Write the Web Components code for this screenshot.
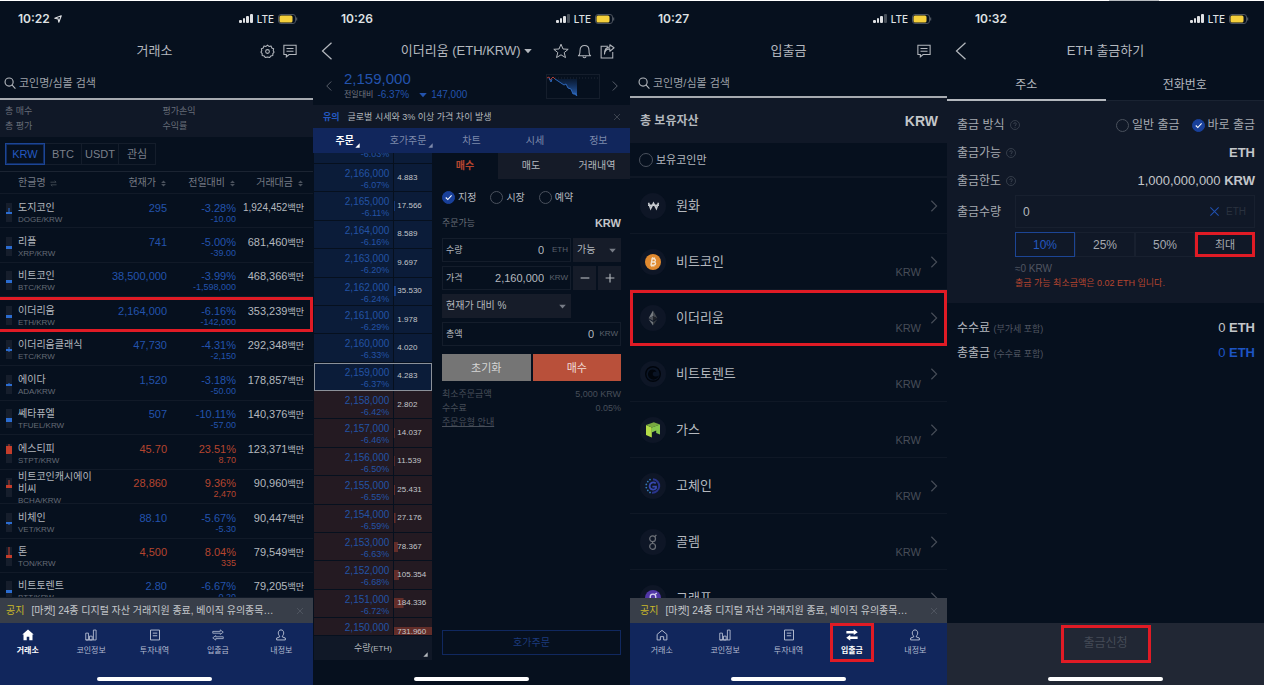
<!DOCTYPE html>
<html lang="ko">
<head>
<meta charset="utf-8">
<title>거래소</title>
<style>
    body {
        margin: 0;
        overflow: hidden;
        background: #06101e;
        color: #b4b8be;
        font-family: "Liberation Sans", "Noto Sans CJK KR", sans-serif;
        font-size: 10px;
        line-height: 12px;
        --bg: #06101e;
        --panel: #101827;
        --line: #141d2b;
        --dim: #666c77;
        --blue: #2353ad;
        --red: #b5452f;
        --navy: #11265c;
        --mark: #e01b25;
    }
    .edge { display: flex; justify-content: flex-end; height: 1px; background: #fff; }
    .edge i { width: 50px; margin-right: 105px; background: #b8bcc0; }
    /* the first phone is cropped a little on its left side */
    .strip {
        display: grid;
        grid-template-columns: repeat(4, minmax(0, 1fr));
        height: calc(100vh - 1px);
        margin-left: -4px;
    }
</style>
</head>
<body>
<div class="edge"><i></i></div>
<main class="strip">
    <phone-screen time="10:22" location>
        <app-header slot="head">거래소
            <x-icon slot="end" name="gear" size="15"></x-icon>
            <x-icon slot="end" name="chat" size="14"></x-icon>
        </app-header>
        <search-box></search-box>
        <market-list></market-list>
        <notice-bar></notice-bar>
        <tab-bar slot="foot" active="0"></tab-bar>
    </phone-screen>

    <phone-screen time="10:26">
        <app-header slot="head" wide>이더리움 (ETH/KRW) <x-icon name="caret" size="8"></x-icon>
            <x-icon slot="start" name="back" size="18"></x-icon>
            <x-icon slot="end" name="star" size="16"></x-icon>
            <x-icon slot="end" name="bell" size="15"></x-icon>
            <x-icon slot="end" name="share" size="15"></x-icon>
        </app-header>
        <price-head></price-head>
        <trade-tabs></trade-tabs>
        <trade-pane></trade-pane>
    </phone-screen>

    <phone-screen time="10:27">
        <app-header slot="head">입출금
            <x-icon slot="end" name="chat" size="14"></x-icon>
        </app-header>
        <search-box short></search-box>
        <asset-list></asset-list>
        <notice-bar></notice-bar>
        <tab-bar slot="foot" active="3" marked></tab-bar>
    </phone-screen>

    <phone-screen time="10:32">
        <app-header slot="head" tight>ETH 출금하기
            <x-icon slot="start" name="back" size="18"></x-icon>
        </app-header>
        <withdraw-form></withdraw-form>
    </phone-screen>
</main>

<script>
// Base element: puts the markup returned by render() in an open shadow root
class BaseElement extends HTMLElement {
    constructor() {
        super();
        this.attachShadow({ mode: 'open' });
    }

    connectedCallback() {
        this.shadowRoot.innerHTML = `<style>
            *, :host { box-sizing: border-box; }
            button, input, select { font: inherit; color: inherit; margin: 0; padding: 0; border: 0; background: none; border-radius: 0; outline: 0; }
            a { color: inherit; text-decoration: none; }
        </style>` + this.render();
    }
}

const stroke = 'fill="none" stroke="currentColor"';

const ICONS = {
    gear: `<g ${stroke} stroke-width="1.1"><path d="M8 1.2 9.6 2.6 11.8 2.1 12.5 4.2 14.6 5 14.1 7.1 15 8.6 13.7 10.2 13.7 12.3 11.6 12.7 10.2 14.5 8 13.8 5.8 14.5 4.4 12.7 2.3 12.3 2.3 10.2 1 8.6 1.9 7.1 1.4 5 3.5 4.2 4.2 2.1 6.4 2.6Z" stroke-linejoin="round"/><circle cx="8" cy="8" r="2"/></g>`,
    chat: `<g ${stroke} stroke-width="1.2"><path d="M1 1.5H15V12H7L3.8 14.6V12H1Z"/><path d="M4 5.2H12M4 8.2H12"/></g>`,
    search: `<g ${stroke} stroke-width="1.5"><circle cx="6.8" cy="6.8" r="5.4"/><path d="M10.6 10.6 15.2 15.4"/></g>`,
    back: `<path d="M12 .6 4 8 12 15.4" ${stroke} stroke-width="1.1"/>`,
    left: `<path d="M11 2 5 8 11 14" ${stroke} stroke-width="1.3"/>`,
    right: `<path d="M5 2 11 8 5 14" ${stroke} stroke-width="1.3"/>`,
    caret: `<path d="M.5 4H15.5L8 12.5Z" fill="currentColor"/>`,
    corner: `<path d="M15 1V15H1Z" fill="currentColor"/>`,
    close: `<path d="M2 2 14 14M14 2 2 14" ${stroke} stroke-width="1.5"/>`,
    minus: `<path d="M1 8H15" ${stroke} stroke-width="1.8"/>`,
    plus: `<path d="M1 8H15M8 1V15" ${stroke} stroke-width="1.8"/>`,
    star: `<path d="M8 1.2 10 6 15.2 6.3 11.2 9.6 12.5 14.6 8 11.8 3.5 14.6 4.8 9.6 .8 6.3 6 6Z" ${stroke} stroke-linejoin="round"/>`,
    bell: `<g ${stroke} stroke-width="1.1"><path d="M1.5 12.5C3 11.5 3.2 10 3.2 6.8 3.2 3.2 5.5 1.5 8 1.5S12.8 3.2 12.8 6.8C12.8 10 13 11.5 14.5 12.5Z" stroke-linejoin="round"/><path d="M6.3 13.2C6.6 15 9.4 15 9.7 13.2"/></g>`,
    share: `<g ${stroke} stroke-width="1.1"><path d="M8.5 2.5H1.2V15H13.6V8.5"/><path d="M4.8 10.8C5 7 7.5 5.2 10.5 5.2V7.8L15 4 10.5 .8V3.2C6.5 3.4 4.6 6.5 4.8 10.8Z" stroke-linejoin="round"/></g>`,
    sort: `<path d="M2.5 6.8 8 1 13.5 6.8ZM2.5 9.2 8 15 13.5 9.2Z" fill="currentColor"/>`,
    swap: `<path d="M1 5H14L10.5 2M15 11H2L5.5 14" ${stroke} stroke-width="1.8"/>`,
    home: `<path d="M8 1.8 1.5 7.2V14.6H5.8V10.2H10.2V14.6H14.5V7.2Z" ${stroke} stroke-width="1.3" stroke-linejoin="round"/>`,
    homeOn: `<path d="M8 .8 .4 7.4H2V15H6.3V10.4H9.7V15H14V7.4H15.6Z" fill="currentColor"/>`,
    bars: `<path d="M1 5.5H4.6V14.6H1ZM6 9.5H9.6V14.6H6ZM11.2 14.6V1.4H14.8V14.6H1" ${stroke} stroke-width="1.2"/>`,
    doc: `<path d="M2 1.4H14V14.6H2ZM5 5.5H11M5 9H11" ${stroke} stroke-width="1.3"/>`,
    move: `<path d="M1 3.2H11V1.2L15 4.2 11 7.2V5.6H1ZM15 10.4H5V8.8L1 11.8 5 14.8V12.8H15Z" ${stroke} stroke-width="1.1"/>`,
    moveOn: `<path d="M.5 2.7H10.3V.2L15.7 4.3 10.3 8V5.9H.5ZM15.5 10H5.7V7.6L.3 11.7 5.7 15.6V13.2H15.5Z" fill="currentColor"/>`,
    person: `<path d="M8 1.2C5.8 1.2 4.4 2.9 4.4 5.2 4.4 7.2 5.3 8.6 6.2 9.3V10.6L2.2 12V14.6H13.8V12L9.8 10.6V9.3C10.7 8.6 11.6 7.2 11.6 5.2 11.6 2.9 10.2 1.2 8 1.2Z" ${stroke} stroke-width="1.3"/>`,
    help: `<circle cx="8" cy="8" r="7.2" ${stroke}/><path d="M5.9 6.3C6 3.8 10.2 3.8 10.1 6.4 10 7.8 8 7.9 8 9.8M8 11.2V12.4" ${stroke} stroke-width="1.2"/>`,
    locate: `<path d="M14.5 1.5 9.6 14.4 8.2 7.8 1.5 6.4Z" ${stroke} stroke-width="2.2" stroke-linejoin="round"/>`,
    // coin marks
    won: `<path d="M.8 4 3.8 12.4 8 4.6 12.2 12.4 15.2 4M0 7.6H16" fill="none" stroke="#c6c9ce" stroke-width="2.2"/>`,
    btc: `<circle cx="8" cy="8" r="8" fill="#e0892f"/><g fill="none" stroke="#f3e3cf" stroke-width="1.4"><path d="M5.4 11.2H8.6C11.4 11 11 8.2 8.8 8 11 7.7 11 5 8.6 4.8H6.6M6.4 8H8.8M7.1 4.8 6 11.2M7.6 3.2V4.8M9.4 3.4V4.9M6.9 11V12.8M8.8 11V12.6"/></g>`,
    eth: `<path d="M8 .5 3.6 8.2 8 6.3Z" fill="#777c82"/><path d="M8 .5 12.4 8.2 8 6.3Z" fill="#454a50"/><path d="M8 6.3 3.6 8.2 8 10.8Z" fill="#4c5158"/><path d="M8 6.3 12.4 8.2 8 10.8Z" fill="#1d2128"/><path d="M3.6 9.3 8 15.6V11.9Z" fill="#70757b"/><path d="M12.4 9.3 8 15.6V11.9Z" fill="#34393f"/>`,
    btt: `<circle cx="8" cy="8" r="7.3" fill="#0a1425" stroke="#01050c" stroke-width="1.4"/><path d="M14 9.5C12.6 13.4 8.4 14.8 5.2 12.6 1.8 10 2.5 5 6.2 3.8 8.6 3 11 4.2 11.4 6.2 10.2 5.4 8.4 5.8 7.8 7.2 7.2 9 8.6 10.4 10.4 10.5 12 10.6 13.2 10.2 14 9.5Z" fill="#01050c"/>`,
    gas: `<path d="M1 3 6.8 5.5V15.6L1 13Z" fill="#b4dc48"/><path d="M1 3 8.8 .2 15 2.4 6.8 5.5Z" fill="#78a840"/><path d="M6.8 5.5 15 2.4V12.6L11.2 11V8.6L6.8 10.4Z" fill="#86c74c"/>`,
    goc: `<path d="M8 1.3A6.7 6.7 0 1 1 7 14.7" fill="none" stroke="#29348c" stroke-width="2"/><path d="M10.8 5.4C8.6 3.4 4.8 4.6 4.6 8 4.6 11.6 9 12.8 11 10.2V8.6H7.4" fill="none" stroke="#3748b0" stroke-width="1.8"/><g fill="#3578b8"><circle cx="5" cy="1.6" r=".9"/><circle cx="2.8" cy="3.6" r=".9"/><circle cx="1.3" cy="6.4" r=".9"/><circle cx="1.3" cy="9.6" r=".9"/><circle cx="2.8" cy="12.4" r=".9"/><circle cx="5" cy="14.4" r=".9"/></g>`,
    glm: `<g fill="none" stroke="#6d7178" stroke-width="1.2"><circle cx="7.6" cy="4.8" r="2.9"/><circle cx="7.6" cy="12.4" r="2.9"/><path d="M7.6 7.7V9.5M9.6 2.8 11.4 .8"/></g>`,
    grt: `<circle cx="8" cy="8" r="8" fill="#5136a6"/><circle cx="8" cy="7" r="2.8" fill="none" stroke="#d9d4ee" stroke-width="1.3"/><path d="M10.3 4.2 11.8 3M6 12.6 8.6 11" stroke="#d9d4ee" stroke-width="1.3"/>`
};

class XIcon extends BaseElement {
    render() {
        const size = this.getAttribute('size') || 12;
        return `<style>
            :host { display: inline-block; width: ${size}px; height: ${size}px; flex: none; }
            svg { display: block; width: 100%; height: 100%; overflow: visible; }
        </style>
        <svg viewBox="0 0 16 16" aria-hidden="true">${ICONS[this.getAttribute('name')]}</svg>`;
    }
}
customElements.define('x-icon', XIcon);

class PhoneScreen extends BaseElement {
    render() {
        const located = this.hasAttribute('location');
        const full = ['10:22', '10:32'].includes(this.getAttribute('time'));
        return `<style>
            :host { position: relative; display: flex; flex-direction: column; min-width: 0; min-height: 0; overflow: hidden; background: var(--bg); }
            .status {
                display: flex; align-items: center; gap: 4px; height: 35px; flex: none;
                padding: 0 15px 0 ${located ? 22 : 28}px;
                font: 600 12px/16px Inter, sans-serif; color: #dfe1e4;
            }
            .status x-icon { margin-right: auto; }
            .time { margin-right: ${located ? 0 : 'auto'}; }
            .net { font-size: 10px; font-weight: 500; }
            .body { display: flex; flex-direction: column; flex: 1; min-height: 0; }
            .bar { position: absolute; left: 0; right: 0; bottom: 4px; width: 36%; height: 4px; margin: auto; border-radius: 2px; background: #fff; }
        </style>
        <div class="status">
            <span class="time">${this.getAttribute('time')}</span>
            ${located ? '<x-icon name="locate" size="8"></x-icon>' : ''}
            <svg width="14" height="9" viewBox="0 0 14 9" fill="#dfe1e4"><rect y="6" width="3" height="3" rx="1"/><rect x="4" y="4" width="2" height="5" rx="1"/><rect x="7" y="2" width="3" height="7" rx="1"/><rect x="11" width="3" height="9" rx="1" opacity="${full ? 1 : .3}"/></svg>
            <span class="net">LTE</span>
            <svg width="20" height="10" viewBox="0 0 20 10"><rect x=".5" y=".5" width="17" height="9" rx="2.5" fill="none" stroke="#4b525d"/><rect x="1.5" y="1.5" width="13" height="7" rx="1.5" fill="#f5d03c"/><path d="M18.6 3.5V6.5" stroke="#4b525d" stroke-width="1.3"/></svg>
        </div>
        <slot name="head"></slot>
        <div class="body"><slot></slot></div>
        <slot name="foot"></slot>
        <div class="bar"></div>`;
    }
}
customElements.define('phone-screen', PhoneScreen);

class AppHeader extends BaseElement {
    render() {
        return `<style>
            :host { display: grid; grid-template-columns: 1fr auto 1fr; align-items: center; flex: none; height: 30px; padding: 0 16px; }
            :host([wide]) { padding: 0 15px 0 5px; }
            :host([tight]) { padding: 0 5px; }
            h1 { margin: 0; font-weight: 400; font-size: 13px; line-height: 18px; white-space: nowrap; }
            .side { display: flex; align-items: center; gap: 8px; }
            .end { justify-content: flex-end; }
        </style>
        <div class="side"><slot name="start"></slot></div>
        <h1><slot></slot></h1>
        <div class="side end"><slot name="end"></slot></div>`;
    }
}
customElements.define('app-header', AppHeader);

class SearchBox extends BaseElement {
    render() {
        return `<style>
            :host { display: block; flex: none; border-bottom: 2px solid #a6aab0; }
            label { display: flex; align-items: center; gap: 3px; height: 32px; padding: 2px 8px 0; }
            :host([short]) label { height: 30px; padding-top: 4px; }
            input { flex: 1; min-width: 0; font-size: 11px; line-height: 14px; }
            input::placeholder { color: #9da1a8; opacity: 1; }
        </style>
        <label><x-icon name="search" size="12"></x-icon><input type="search" aria-label="코인명/심볼 검색" placeholder="코인명/심볼 검색"></label>`;
    }
}
customElements.define('search-box', SearchBox);

// name, pair, price, rate, diff, volume, [wick top, wick bottom, body top, body height]
const COINS = [
    ['도지코인', 'DOGE/KRW', '295', '-3.28%', '-10.00', '1,924,452', [5, 11, 9, 2]],
    ['리플', 'XRP/KRW', '741', '-5.00%', '-39.00', '681,460', [9, 12, 9, 3]],
    ['비트코인', 'BTC/KRW', '38,500,000', '-3.99%', '-1,598,000', '468,366', [9, 12, 9, 3]],
    ['이더리움', 'ETH/KRW', '2,164,000', '-6.16%', '-142,000', '353,239', [9, 12, 9, 3]],
    ['이더리움클래식', 'ETC/KRW', '47,730', '-4.31%', '-2,150', '292,348', [7, 12, 9, 2]],
    ['에이다', 'ADA/KRW', '1,520', '-3.18%', '-50.00', '178,857', [8, 11, 9, 2]],
    ['쎄타퓨엘', 'TFUEL/KRW', '507', '-10.11%', '-57.00', '140,376', [9, 13, 9, 4]],
    ['에스티피', 'STPT/KRW', '45.70', '23.51%', '8.70', '123,371', [0, 9, 2, 8]],
    ['비트코인캐시에이비씨', 'BCHA/KRW', '28,860', '9.36%', '2,470', '90,960', [2, 9, 7, 3]],
    ['비체인', 'VET/KRW', '88.10', '-5.67%', '-5.30', '90,447', [9, 12, 9, 2]],
    ['톤', 'TON/KRW', '4,500', '8.04%', '335', '79,549', [0, 10, 8, 3]],
    ['비트토렌트', 'BTT/KRW', '2.80', '-6.67%', '-0.20', '79,205', [9, 12, 9, 3]]
];

class MarketList extends BaseElement {
    row([name, pair, price, rate, diff, volume, [w1, w2, top, height]]) {
        const down = rate.startsWith('-');
        const fill = down ? '#2b6cd0' : '#c43d2b';
        return `<tr class="${down ? 'down' : 'up'} ${pair === 'ETH/KRW' ? 'marked' : ''}">
            <td><svg width="6" height="19" viewBox="0 0 6 19"><path d="M0 0H6V19H0Z" fill="#161e2c"/><path d="M3 ${w1}V${w2}" stroke="${fill}"/><path d="M0 ${top}h6v${height}h-6Z" fill="${fill}"/></svg></td>
            <td class="name">${name}<small>${pair}</small></td>
            <td class="num single">${price}</td>
            <td class="num">${rate}<small>${diff}</small></td>
            <td class="num single volume ${volume.length > 8 ? 'long' : ''}">${volume}<b>백만</b></td>
        </tr>`;
    }

    render() {
        return `<style>
            :host { display: flex; flex-direction: column; flex: 1; min-height: 0; }
            .summary { display: grid; grid-template-columns: 1fr 1fr; column-gap: 16px; padding: 4px 9px 3px; background: var(--panel); color: var(--dim); font-size: 9px; line-height: 15px; }
            .markets { display: flex; padding: 6px 9px; border-bottom: 1px solid #1b2432; }
            .markets button { width: 38px; height: 22px; border: 1px solid var(--line); margin-right: -1px; font-size: 11px; color: #7a7f89; }
            .markets button.on { width: 40px; border-color: #1c4595; color: #2459c0; position: relative; box-shadow: inset 0 0 0 1px #102c62; }
            table, tbody, thead { display: grid; min-height: 0; }
            table { flex: 1; grid-template-rows: 22px minmax(0, 1fr); }
            tbody { grid-template-rows: repeat(11, minmax(0, 1fr)) 25px; overflow: hidden; }
            tr { display: grid; grid-template-columns: 12px 76fr 73fr 69fr 68fr; grid-template-rows: minmax(34px, 1fr); align-items: center; min-height: 0; padding: 0 9px 0 10px; border-bottom: 1px solid #111a28; overflow: hidden; }
            thead tr { grid-template-rows: 1fr; }
            th, td { padding: 0; font-weight: 400; text-align: left; min-width: 0; }
            th { color: #757a84; white-space: nowrap; }
            th:nth-child(n+3) { text-align: right; }
            th x-icon { margin-left: 4px; vertical-align: -1px; color: #4a515c; }
            td { padding-top: 4px; }
            td:first-child { padding-top: 2px; }
            td svg { display: block; }
            small { display: block; font-size: 8px; line-height: 11px; color: #656b76; }
            .num { text-align: right; font-size: 11px; white-space: nowrap; }
            .num small { font-size: 9px; color: inherit; }
            .single { padding-bottom: 11px; }
            .down .num { color: var(--blue); }
            .up .num { color: var(--red); }
            tr .num.volume { color: #b4b8be; }
            .long { font-size: 10px; }
            b { font-weight: 400; font-size: 9px; line-height: 0; }
            .marked { outline: 3px solid var(--mark); outline-offset: -3px; }
        </style>
        <div class="summary"><span>총 매수</span><span>평가손익</span><span>총 평가</span><span>수익률</span></div>
        <div class="markets"><button class="on">KRW</button><button>BTC</button><button>USDT</button><button>관심</button></div>
        <table>
            <thead><tr><th></th>
                <th>한글명<x-icon name="swap" size="7"></x-icon></th>
                <th>현재가<x-icon name="sort" size="7"></x-icon></th>
                <th>전일대비<x-icon name="sort" size="7"></x-icon></th>
                <th>거래대금<x-icon name="sort" size="7"></x-icon></th>
            </tr></thead>
            <tbody>${COINS.map(coin => this.row(coin)).join('')}</tbody>
        </table>`;
    }
}
customElements.define('market-list', MarketList);

class NoticeBar extends BaseElement {
    render() {
        return `<style>
            :host { display: flex; align-items: center; gap: 7px; flex: none; height: 25px; padding: 0 9px 0 10px; background: #383e49; color: #c3c6ca; }
            a { flex: 1; min-width: 0; white-space: nowrap; }
            b { font-weight: 400; color: #c9b82b; }
            button { display: flex; color: #565c67; }
        </style>
        <b>공지</b><a href="#">[마켓] 24종 디지털 자산 거래지원 종료, 베이직 유의종목…</a>
        <button aria-label="닫기"><x-icon name="close" size="8"></x-icon></button>`;
    }
}
customElements.define('notice-bar', NoticeBar);

class TabBar extends BaseElement {
    render() {
        const active = Number(this.getAttribute('active'));
        const tabs = [['home', '거래소'], ['bars', '코인정보'], ['doc', '투자내역'], ['move', '입출금'], ['person', '내정보']];
        const links = tabs.map(([icon, label], i) =>
            `<a href="#" class="${i === active ? 'on' : ''}"><span><x-icon name="${icon}${i === active ? 'On' : ''}" size="12"></x-icon>${label}</span></a>`);
        return `<style>
            :host { display: flex; flex: none; height: 62px; background: var(--navy); font-size: 8px; line-height: 12px; color: #b3bbd0; }
            a { display: flex; flex: 1; justify-content: center; align-items: flex-start; }
            span { display: flex; flex-direction: column; align-items: center; gap: 4px; width: 44px; height: 39px; padding-top: 6px; }
            .on { color: #fff; font-weight: 700; }
            :host([marked]) .on span { outline: 3px solid var(--mark); outline-offset: -3px; }
        </style>${links.join('')}`;
    }
}
customElements.define('tab-bar', TabBar);

class PriceHead extends BaseElement {
    render() {
        return `<style>
            :host { display: block; flex: none; }
            .quote { display: flex; align-items: center; height: 39px; padding: 1px 9px 0 10px; color: #59606b; }
            .value { flex: 1; margin-left: 9px; color: var(--blue); }
            strong { display: block; font-weight: 400; font-size: 15px; line-height: 18px; }
            p { display: flex; align-items: center; gap: 4px; margin: 0; line-height: 14px; }
            small { font-size: 8px; color: #737882; }
            p x-icon { margin-left: 6px; }
            .chart { display: block; margin-right: 9px; }
            .warn { display: flex; align-items: center; gap: 8px; height: 23px; padding: 0 9px 0 10px; background: var(--panel); font-size: 9px; }
            .warn b { color: #2459c0; }
            .warn span { flex: 1; }
            .warn button { display: flex; color: #4b525d; }
        </style>
        <div class="quote">
            <x-icon name="left" size="12"></x-icon>
            <div class="value"><strong>2,159,000</strong>
                <p><small>전일대비</small>-6.37%<x-icon name="caret" size="8"></x-icon>147,000</p></div>
            <svg class="chart" width="54" height="25" viewBox="0 0 54 25">
                <defs><linearGradient id="fade" x2="0" y2="1"><stop stop-color="#1a4384" stop-opacity=".2"/><stop offset="1" stop-color="#2a64b8"/></linearGradient></defs>
                <rect x=".5" y=".5" width="53" height="24" fill="none" stroke="#151e2c"/>
                <path d="M9 4H53" stroke="#1e2735" stroke-dasharray="1 2"/>
                <path d="M9 5 12 7 15 9 18 11 20 10 22 14 25 15 27 20 31 22V5Z" fill="url(#fade)"/>
                <path d="M1 4 3 3 4 6 6 4 7 3 9 5" fill="none" stroke="#a83c36"/>
                <path d="M3 4 5 8 6 5M9 5 12 7 15 9 18 11 20 10 22 14 25 15 27 20 29 19 31 22" fill="none" stroke="#2d66b8"/>
            </svg>
            <x-icon name="right" size="12"></x-icon>
        </div>
        <div class="warn"><b>유의</b><span>글로벌 시세와 3% 이상 가격 차이 발생</span>
            <button aria-label="닫기"><x-icon name="close" size="8"></x-icon></button></div>`;
    }
}
customElements.define('price-head', PriceHead);

class TradeTabs extends BaseElement {
    render() {
        return `<style>
            :host { display: flex; flex: none; height: 25px; background: var(--navy); color: #7e8aab; }
            a { flex: 1; line-height: 26px; text-align: center; }
            span { position: relative; }
            .on { color: #fff; font-weight: 700; }
            x-icon { position: absolute; left: 100%; bottom: -2px; margin-left: 1px; }
        </style>
        <a href="#" class="on"><span>주문<x-icon name="corner" size="5"></x-icon></span></a>
        <a href="#"><span>호가주문<x-icon name="corner" size="5"></x-icon></span></a>
        <a href="#">차트</a><a href="#">시세</a><a href="#">정보</a>`;
    }
}
customElements.define('trade-tabs', TradeTabs);

// Round tick box or radio with its text
class CheckOption extends BaseElement {
    render() {
        const type = this.getAttribute('type') || 'radio';
        const size = this.getAttribute('size') || 13;
        return `<style>
            :host { display: inline-block; }
            label { display: flex; align-items: center; gap: 3px; white-space: nowrap; }
            input { appearance: none; width: ${size}px; height: ${size}px; border: 1px solid #4a515d; border-radius: 50%; }
            input:checked {
                border-color: #19409a;
                background: #19409a url('data:image/svg+xml,<svg xmlns="http://www.w3.org/2000/svg" viewBox="0 0 16 16"><path d="M4 8 7 11 12.5 5" fill="none" stroke="white" stroke-width="1.6"/></svg>') center / 100%;
            }
        </style>
        <label><input type="${type}" ${this.hasAttribute('checked') ? 'checked' : ''}><slot></slot></label>`;
    }
}
customElements.define('check-option', CheckOption);

// the first row is scrolled almost out of view, its price with it
const BOOK = [
    ['', '-6.03%', '6.882'], ['2,166,000', '-6.07%', '4.883'], ['2,165,000', '-6.11%', '17.566'],
    ['2,164,000', '-6.16%', '8.589'], ['2,163,000', '-6.20%', '9.697'], ['2,162,000', '-6.24%', '35.530'],
    ['2,161,000', '-6.29%', '1.978'], ['2,160,000', '-6.33%', '4.020'], ['2,159,000', '-6.37%', '4.283'],
    ['2,158,000', '-6.42%', '2.802'], ['2,157,000', '-6.46%', '14.037'], ['2,156,000', '-6.50%', '11.539'],
    ['2,155,000', '-6.55%', '25.431'], ['2,154,000', '-6.59%', '27.176'], ['2,153,000', '-6.63%', '78.367'],
    ['2,152,000', '-6.68%', '105.354'], ['2,151,000', '-6.72%', '184.336'], ['2,150,000', '-6.76%', '731.960']
];

class OrderBook extends BaseElement {
    render() {
        // asks are the nine rows on top, bids the rest
        const rows = BOOK.map(([price, rate, amount], i) => `<tr class="${i < 9 ? 'ask' : 'bid'} ${i === 8 ? 'now' : ''}">
            <td class="price">${price}<small>${rate}</small></td>
            <td class="amount" style="background-size: ${Math.round(amount / 7.3)}% 10px">${amount}</td></tr>`);
        return `<style>
            :host { display: flex; flex-direction: column; min-height: 0; padding-left: 1px; }
            table { display: grid; flex: 1; min-height: 0; }
            tbody { display: grid; grid-template-rows: 11px repeat(16, minmax(0, 1fr)) 18px; min-height: 0; }
            tr { display: grid; grid-template-columns: 80fr 38fr; grid-template-rows: minmax(27px, 1fr); column-gap: 1px; min-height: 0; overflow: hidden; border-bottom: 1px solid var(--bg); }
            tr:first-child { align-content: end; }
            tr:first-child .price { padding-top: 13px; }
            td { padding: 0; background-color: #0b1c39; background-repeat: no-repeat; background-position: left center; }
            .price { padding: 4px 4px 0 0; text-align: right; color: #2353a5; }
            small { display: block; font-size: 9px; line-height: 11px; }
            .amount { display: flex; align-items: center; padding-left: 3px; font-size: 8px; color: #c3c6ca; background-image: linear-gradient(#17408c, #17408c); }
            .bid td { background-color: #241a22; }
            .bid .amount { background-image: linear-gradient(#632d29, #632d29); }
            .now { outline: 1px solid #8b919a; outline-offset: -1px; }
            button { position: relative; height: 24px; background: var(--panel); font-size: 9px; }
            button small { display: inline; font-size: 8px; }
            button x-icon { position: absolute; right: 4px; bottom: 3px; }
        </style>
        <table><tbody>${rows.join('')}</tbody></table>
        <button>수량<small>(ETH)</small><x-icon name="corner" size="5"></x-icon></button>`;
    }
}
customElements.define('order-book', OrderBook);

class OrderForm extends BaseElement {
    render() {
        return `<style>
            :host { display: flex; flex-direction: column; min-width: 0; }
            nav { display: grid; grid-template-columns: repeat(3, 1fr); line-height: 26px; text-align: center; }
            nav a { background: #151b28; }
            nav .on { background: none; color: var(--red); font-weight: 700; }
            form { display: flex; flex-direction: column; flex: 1; padding: 12px 9px 5px 10px; }
            .kinds { display: flex; gap: 14px; }
            .between { display: flex; justify-content: space-between; }
            .can { margin: 13px 0 9px; line-height: 12px; font-size: 9px; color: #686e78; }
            .can b { font-size: 11px; color: #c3c6ca; }
            .grid { display: grid; grid-template-columns: minmax(0, 1fr) 23px 23px; gap: 4px 2px; }
            .field { display: flex; align-items: center; gap: 5px; min-width: 0; height: 24px; padding: 0 2px 0 3px; border: 1px solid #141d2b; font-size: 9px; white-space: nowrap; }
            .field input { flex: 1; width: 0; min-width: 0; text-align: right; font-size: 11px; }
            .field span { min-width: 19px; text-align: right; font-size: 8px; color: #5b616c; }
            .pick { display: flex; align-items: center; position: relative; min-width: 0; height: 24px; background: #161c29; }
            .pick select { appearance: none; width: 100%; height: 100%; padding: 0 4px; }
            .pick x-icon { position: absolute; right: 5px; pointer-events: none; color: #777c86; }
            .two { grid-column: span 2; }
            .all { grid-column: 1 / -1; }
            .step { display: grid; place-items: center; background: #161c29; }
            .send { display: grid; grid-template-columns: 1fr 1fr; gap: 2px; margin: 8px 0 6px; }
            .send button { height: 27px; background: #757575; font-size: 11px; color: #d5d5d5; }
            .send .buy { background: #b9503a; color: #f0ddd8; }
            .info { font-size: 9px; line-height: 14px; color: #474e59; }
            .info a { text-decoration: underline; }
            .ladder { height: 25px; margin-top: auto; border: 1px solid #10285f; color: #1c3a7d; }
        </style>
        <nav><a href="#" class="on">매수</a><a href="#">매도</a><a href="#">거래내역</a></nav>
        <form>
            <div class="kinds"><check-option checked>지정</check-option><check-option>시장</check-option><check-option>예약</check-option></div>
            <div class="between can"><span>주문가능</span><b>KRW</b></div>
            <div class="grid">
                <label class="field">수량<input value="0"><span>ETH</span></label>
                <div class="pick two"><select aria-label="가능"><option>가능</option></select><x-icon name="caret" size="7"></x-icon></div>
                <label class="field">가격<input value="2,160,000"><span>KRW</span></label>
                <button type="button" class="step" aria-label="내리기"><x-icon name="minus" size="10"></x-icon></button>
                <button type="button" class="step" aria-label="올리기"><x-icon name="plus" size="10"></x-icon></button>
                <div class="pick"><select aria-label="현재가 대비"><option>현재가 대비 %</option></select><x-icon name="caret" size="7"></x-icon></div>
                <label class="field all">총액<input value="0"><span>KRW</span></label>
            </div>
            <div class="send"><button type="reset">초기화</button><button type="button" class="buy">매수</button></div>
            <div class="info">
                <div class="between"><span>최소주문금액</span><span>5,000 KRW</span></div>
                <div class="between"><span>수수료</span><span>0.05%</span></div>
                <a href="#">주문유형 안내</a>
            </div>
            <button type="button" class="ladder">호가주문</button>
        </form>`;
    }
}
customElements.define('order-form', OrderForm);

class TradePane extends BaseElement {
    render() {
        return `<style>
            :host { display: grid; grid-template-columns: 119fr 198fr; flex: 1; min-height: 0; padding-bottom: 25px; }
        </style><order-book></order-book><order-form></order-form>`;
    }
}
customElements.define('trade-pane', TradePane);

class AssetList extends BaseElement {
    render() {
        const assets = [['won', '원화'], ['btc', '비트코인', 'KRW'], ['eth', '이더리움', 'KRW'], ['btt', '비트토렌트', 'KRW'],
            ['gas', '가스', 'KRW'], ['goc', '고체인', 'KRW'], ['glm', '골렘', 'KRW'], ['grt', '그래프']];
        const items = assets.map(([icon, name, unit]) => `<li><a href="#" class="${icon === 'eth' ? 'marked' : ''}">
            <i><x-icon name="${icon}" size="${icon === 'won' ? 11 : 16}"></x-icon></i><span>${name}</span>
            ${unit ? `<small>${unit}</small>` : ''}<x-icon name="right" size="14"></x-icon></a></li>`);
        return `<style>
            :host { display: flex; flex-direction: column; flex: 1; min-height: 0; }
            .total { display: flex; flex: none; justify-content: space-between; align-items: center; height: 45px; padding: 0 9px 0 10px; background: var(--panel); font-size: 12px; font-weight: 700; }
            .total b { font-size: 14px; color: #c3c6ca; }
            .only { display: flex; align-items: center; flex: none; height: 35px; padding: 1px 9px 0; border-bottom: 2px solid #0f1826; font-size: 11px; }
            ul { flex: 1; min-height: 0; margin: 0; padding: 0; list-style: none; overflow: hidden; }
            a { display: flex; align-items: center; height: 56px; padding: 0 6px 0 10px; border-bottom: 1px solid #0f1826; }
            i { display: grid; place-items: center; width: 26px; height: 26px; border-radius: 50%; background: #0e1626; }
            span { flex: 1; margin-left: 10px; font-size: 13px; line-height: 16px; }
            small { margin: 20px 6px 0 0; font-size: 11px; color: #474d58; }
            a > x-icon { color: #474d58; }
            .marked { outline: 3px solid var(--mark); outline-offset: -3px; }
        </style>
        <div class="total">총 보유자산<b>KRW</b></div>
        <div class="only"><check-option type="checkbox" size="14">보유코인만</check-option></div>
        <ul>${items.join('')}</ul>`;
    }
}
customElements.define('asset-list', AssetList);

class WithdrawForm extends BaseElement {
    render() {
        return `<style>
            :host { display: flex; flex-direction: column; flex: 1; min-height: 0; font-size: 12px; line-height: 16px; }
            nav { display: grid; grid-template-columns: 1fr 1fr; text-align: center; }
            nav a { height: 35px; padding-top: 11px; border-bottom: 1px solid #1a2332; }
            nav .on { border-bottom: 2px solid #b4b8be; }
            .form { padding: 10px 9px 12px 10px; background: var(--panel); }
            .row { display: flex; align-items: center; gap: 5px; height: 28px; color: #a5a9b0; }
            .row x-icon { color: #4a515d; }
            .push { margin-left: auto; }
            .row > span:last-child, dd { font-size: 13px; color: #c3c6ca; }
            .opts { display: flex; gap: 12px; }
            .amount { display: grid; grid-template-columns: 58px 1fr; row-gap: 4px; align-items: center; color: #a5a9b0; }
            .box { display: flex; align-items: center; gap: 6px; height: 33px; padding: 0 8px 0 7px; border: 1px solid #18202f; font-size: 10px; color: #2a323f; }
            .box input { flex: 1; min-width: 0; font-size: 12px; color: #b4b8be; }
            .box button { display: flex; color: #2050b0; }
            .rates { display: grid; grid-template-columns: repeat(4, 1fr); grid-column: 2; }
            .rates button { height: 25px; border: 1px solid #18202f; }
            .rates .on { border-color: #1c4595; color: #2459c0; }
            .rates .max { border: 3px solid var(--mark); font-size: 11px; }
            .hint { grid-column: 2; margin: 1px 0 0; font-size: 10px; line-height: 14px; color: #505662; }
            .hint em { display: block; font-style: normal; font-size: 9px; line-height: 15px; color: var(--red); }
            dl { display: grid; grid-template-columns: auto auto; row-gap: 9px; margin: 0; padding: 17px 9px 0 10px; }
            dd { margin: 0; text-align: right; }
            dt small { font-size: 9px; line-height: 0; color: #505662; }
            .sum { color: #1d54c4; }
            footer { display: flex; justify-content: center; align-items: flex-start; height: 62px; margin-top: auto; padding-top: 2px; background: #212734; }
            footer button { width: 90px; height: 38px; padding-bottom: 3px; border: 3px solid var(--mark); color: #454b57; }
        </style>
        <nav><a href="#" class="on">주소</a><a href="#">전화번호</a></nav>
        <div class="form">
            <div class="row">출금 방식<x-icon name="help" size="10"></x-icon>
                <div class="push opts"><check-option>일반 출금</check-option><check-option checked>바로 출금</check-option></div></div>
            <div class="row">출금가능<x-icon name="help" size="10"></x-icon><span class="push"><b>ETH</b></span></div>
            <div class="row">출금한도<x-icon name="help" size="10"></x-icon><span class="push">1,000,000,000 <b>KRW</b></span></div>
            <div class="amount">
                <label for="qty">출금수량</label>
                <div class="box"><input id="qty" value="0"><button aria-label="지우기"><x-icon name="close" size="11"></x-icon></button>ETH</div>
                <div class="rates"><button class="on">10%</button><button>25%</button><button>50%</button><button class="max">최대</button></div>
                <p class="hint">≈0 KRW<em>출금 가능 최소금액은 0.02 ETH 입니다.</em></p>
            </div>
        </div>
        <dl>
            <dt>수수료 <small>(부가세 포함)</small></dt><dd>0 <b>ETH</b></dd>
            <dt>총출금 <small>(수수료 포함)</small></dt><dd class="sum">0 <b>ETH</b></dd>
        </dl>
        <footer><button>출금신청</button></footer>`;
    }
}
customElements.define('withdraw-form', WithdrawForm);
</script>
</body>
</html>
